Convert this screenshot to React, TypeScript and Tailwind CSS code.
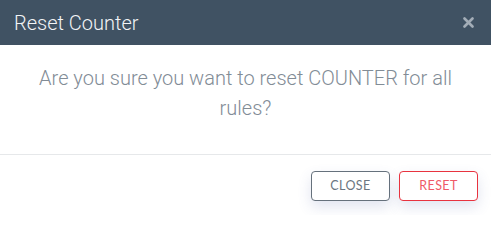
export default function App() {
  return (
    <div className="w-[491px] h-[215px] bg-white flex flex-col font-['Roboto',sans-serif] overflow-hidden">
      <div className="h-[45px] shrink-0 bg-[#405263] flex items-center justify-between pl-[14px] pr-[17px]">
        <h2 className="text-[20px] font-light text-[#f2f4f6] leading-none">Reset Counter</h2>
        <button className="text-[#a3adb7]" aria-label="Close">
          <svg width="11" height="11" viewBox="0 0 11 11">
            <path d="M1.5 1.5 L9.5 9.5 M9.5 1.5 L1.5 9.5" stroke="currentColor" strokeWidth="2.6" strokeLinecap="round" />
          </svg>
        </button>
      </div>

      <div className="pt-[18px] pb-[31px] px-[28px] text-center">
        <p className="text-[20px] font-light leading-[30px] text-[#828c96]">
          Are you sure you want to reset COUNTER for all rules?
        </p>
      </div>

      <div className="border-t border-[#e6e8ea] flex justify-end gap-[9px] pt-[16px] pr-[13px]">
        <button className="w-[79px] h-[30px] rounded-[4px] border border-[#66717c] bg-white text-[#6b7681] text-[12.5px] tracking-[0.4px] font-['Lato',sans-serif] shadow-[0_6px_14px_rgba(70,90,160,0.16)]">
          CLOSE
        </button>
        <button className="w-[79px] h-[30px] rounded-[4px] border border-[#e8333f] bg-white text-[#ef5a67] text-[12.5px] tracking-[0.4px] font-['Lato',sans-serif] shadow-[0_6px_14px_rgba(70,90,160,0.16)]">
          RESET
        </button>
      </div>
    </div>
  );
}
